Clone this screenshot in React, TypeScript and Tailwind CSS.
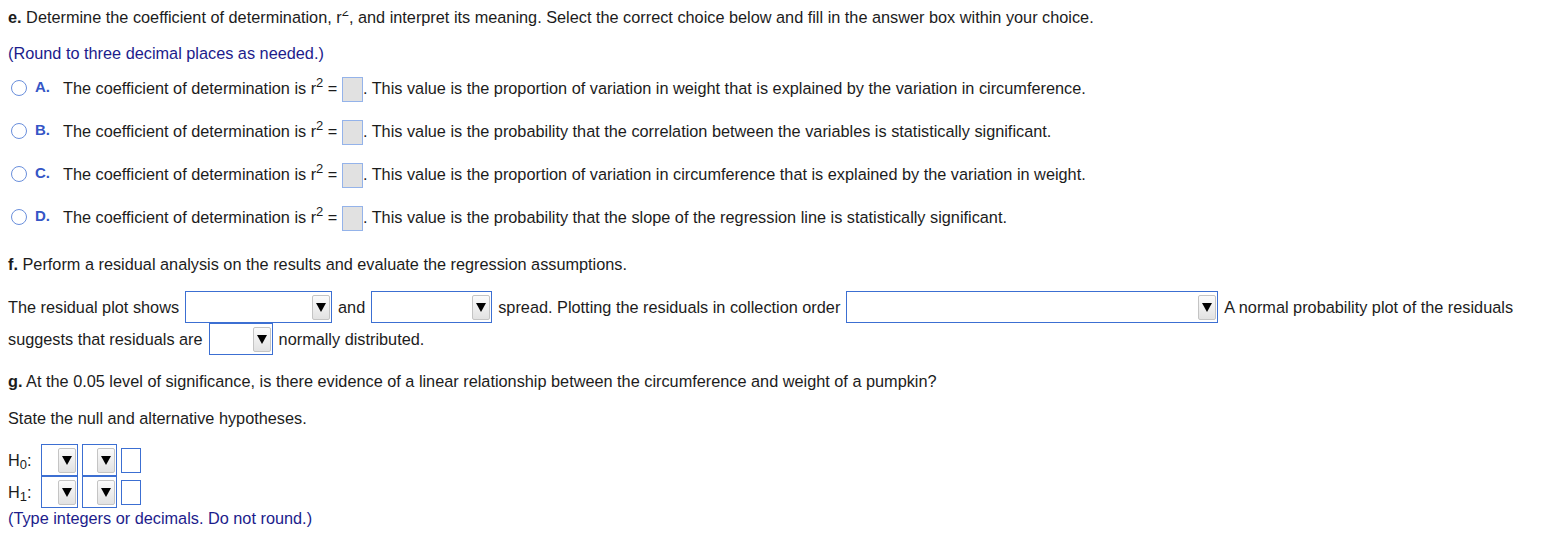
import React from "react";

function Drop({ w }: { w: string }) {
  return (
    <span
      className={`${w} h-[32px] shrink-0 border border-[#3c6fd2] bg-white flex items-center justify-end pr-px`}
    >
      <span className="w-[18px] h-[25px] border border-[#c4c4c4] rounded-[2px] bg-linear-to-b from-[#fbfbfb] to-[#e2e2e2] flex items-center justify-center">
        <span className="w-0 h-0 border-l-[5px] border-r-[5px] border-t-[9px] border-l-transparent border-r-transparent border-t-black" />
      </span>
    </span>
  );
}

const choices = [
  {
    letter: "A.",
    text: "This value is the proportion of variation in weight that is explained by the variation in circumference.",
  },
  {
    letter: "B.",
    text: "This value is the probability that the correlation between the variables is statistically significant.",
  },
  {
    letter: "C.",
    text: "This value is the proportion of variation in circumference that is explained by the variation in weight.",
  },
  {
    letter: "D.",
    text: "This value is the probability that the slope of the regression line is statistically significant.",
  },
];

export default function App() {
  return (
    <div className="min-h-screen bg-white pl-[8px] pt-[7px] text-[16.3px] leading-[20px] text-[#1c1c1c] font-['Liberation_Sans',Arial,sans-serif]">
      <p>
        <b>e.</b> Determine the coefficient of determination, r
        <span className="inline-block h-[7px] overflow-hidden align-[5px]">
          <span className="block -mt-[5px] text-[13px] leading-[12px]">2</span>
        </span>
        , and interpret its meaning. Select the correct choice below and fill in the answer box within your choice.
      </p>

      <p className="mt-[16px] text-[#1c1c8c]">(Round to three decimal places as needed.)</p>

      <div className="mt-[13px] flex flex-col gap-[17px]">
        {choices.map((c) => (
          <div key={c.letter} className="flex items-center h-[26px]">
            <span className="ml-[3px] w-[16px] h-[16px] rounded-full border-[1.5px] border-[#6a8fdc] -mt-[3px]" />
            <span className="ml-[8px] w-[28px] -mt-[5px] text-[15px] font-bold text-[#3556c6]">{c.letter}</span>
            <span className="whitespace-nowrap">
              The coefficient of determination is r<sup className="text-[13px]">2</sup> ={" "}
              <span className="inline-block align-middle w-[21px] h-[25px] border border-[#94b3ea] bg-[#e1e1e1]" />
              . {c.text}
            </span>
          </div>
        ))}
      </div>

      <p className="mt-[23px]">
        <b>f.</b> Perform a residual analysis on the results and evaluate the regression assumptions.
      </p>

      <div className="mt-[17px] flex items-center gap-[6px] h-[32px] whitespace-nowrap">
        <span>The residual plot shows</span>
        <Drop w="w-[147px]" />
        <span>and</span>
        <Drop w="w-[121px]" />
        <span>spread. Plotting the residuals in collection order</span>
        <Drop w="w-[372px]" />
        <span>A normal probability plot of the residuals</span>
      </div>
      <div className="flex items-center gap-[6px] h-[32px] whitespace-nowrap">
        <span>suggests that residuals are</span>
        <Drop w="w-[64px]" />
        <span>normally distributed.</span>
      </div>

      <p className="mt-[16px]">
        <b>g.</b> At the 0.05 level of significance, is there evidence of a linear relationship between the circumference and weight of a pumpkin?
      </p>

      <p className="mt-[17px]">State the null and alternative hypotheses.</p>

      <div className="mt-[16px] flex flex-col">
        {["0", "1"].map((n) => (
          <div key={n} className="flex items-center h-[32px]">
            <span className="w-[33px]">
              H<sub className="text-[13px]">{n}</sub>:
            </span>
            <Drop w="w-[37px]" />
            <span className="ml-[4px]">
              <Drop w="w-[35px]" />
            </span>
            <span className="ml-[4px] w-[20px] h-[25px] border border-[#3c6fd2] bg-white" />
          </div>
        ))}
      </div>

      <p className="text-[#1c1c8c]">(Type integers or decimals. Do not round.)</p>
    </div>
  );
}
